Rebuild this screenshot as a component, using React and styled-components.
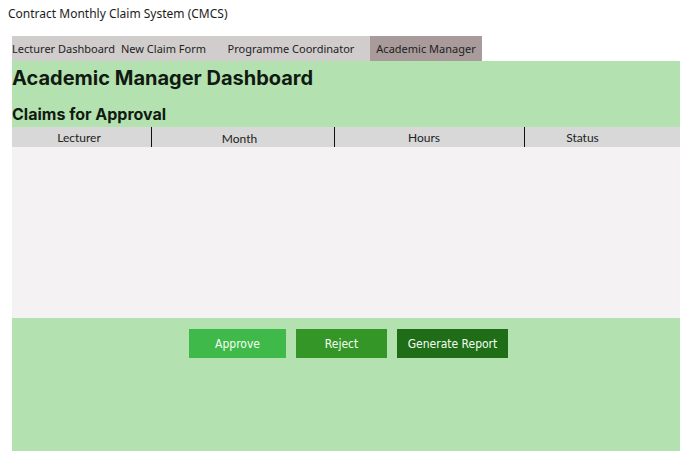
import React from 'react'
import styled, { createGlobalStyle } from 'styled-components'

const GlobalStyle = createGlobalStyle`
    html, body {
        margin: 0;
        padding: 0;
        background: #ffffff;
    }

    body {
        font-family: "Noto Sans", "DejaVu Sans", sans-serif;
        color: #1c1c1c;
    }
`

const Page = styled.div`
    width: 692px;
    height: 465px;
    padding: 0 12px 0 12px;
    box-sizing: border-box;
`

const SiteTitle = styled.div`
    font-size: 12px;
    line-height: 16px;
    padding: 6px 0 0 0;
    margin-left: -4px;
    height: 36px;
    box-sizing: border-box;
`

const TabBar = styled.nav`
    display: flex;
    height: 25px;
`

const Tab = styled.div`
    display: flex;
    align-items: center;
    justify-content: center;
    width: ${props => props.$w}px;
    height: 100%;
    font-size: 11px;
    background: ${props => props.$active ? '#a99b9b' : '#d1cdcd'};
    color: #222;
    white-space: nowrap;
`

const Header = styled.header`
    background: #b3e2b0;
    height: 66px;
    padding: 5px 0 0 0;
    box-sizing: border-box;

    h1 {
        font-family: Inter, sans-serif;
        font-size: 20px;
        line-height: 24px;
        font-weight: 700;
        margin: 0 0 14px 0;
        color: #111a11;
    }

    h2 {
        font-family: Inter, sans-serif;
        font-size: 16px;
        line-height: 20px;
        font-weight: 700;
        margin: 0;
        color: #111a11;
    }
`

const Table = styled.div`
    display: grid;
    grid-template-columns: 139px 183px 190px 1fr;
    grid-template-rows: 20px 171px;
`

const HeadCell = styled.div`
    background: #d8d8d8;
    font-family: Lato, sans-serif;
    font-size: 12px;
    display: flex;
    align-items: center;
    justify-content: center;
    padding-top: ${props => props.$low ? '2px' : '0'};
    padding-right: ${props => props.$shift || 0}px;
    border-left: ${props => props.$first ? 'none' : '1px solid #111'};
    color: #222;
`

const Body = styled.div`
    grid-column: 1 / -1;
    background: #f4f2f3;
`

const Footer = styled.footer`
    background: #b3e2b0;
    height: 133px;
    display: flex;
    justify-content: center;
    align-items: flex-start;
    gap: 10px;
    padding: 11px 0 0 5px;
    box-sizing: border-box;
`

const Button = styled.button`
    width: ${props => props.$w}px;
    height: 29px;
    border: none;
    background: ${props => props.$bg};
    color: #f4fff2;
    font-family: "DejaVu Sans Condensed", "DejaVu Sans", sans-serif;
    font-size: 12px;
    padding: 0;
`

export default function App(){
    const tabs = [
        { label: 'Lecturer Dashboard', w: 103 },
        { label: 'New Claim Form', w: 97 },
        { label: 'Programme Coordinator', w: 158 },
        { label: 'Academic Manager', w: 112, active: true },
    ]

    return(
        <Page>
            <GlobalStyle />
            <SiteTitle>Contract Monthly Claim System (CMCS)</SiteTitle>

            <TabBar>
                {tabs.map(t => (
                    <Tab key={t.label} $w={t.w} $active={t.active}>{t.label}</Tab>
                ))}
            </TabBar>

            <Header>
                <h1>Academic Manager Dashboard</h1>
                <h2>Claims for Approval</h2>
            </Header>

            <Table>
                <HeadCell $first $shift={5}>Lecturer</HeadCell>
                <HeadCell $low $shift={7}>Month</HeadCell>
                <HeadCell $shift={11}>Hours</HeadCell>
                <HeadCell $shift={40}>Status</HeadCell>
                <Body />
            </Table>

            <Footer>
                <Button $w={97} $bg="#3fba4a">Approve</Button>
                <Button $w={91} $bg="#359628">Reject</Button>
                <Button $w={111} $bg="#1f6e17">Generate Report</Button>
            </Footer>
        </Page>
    )
}
